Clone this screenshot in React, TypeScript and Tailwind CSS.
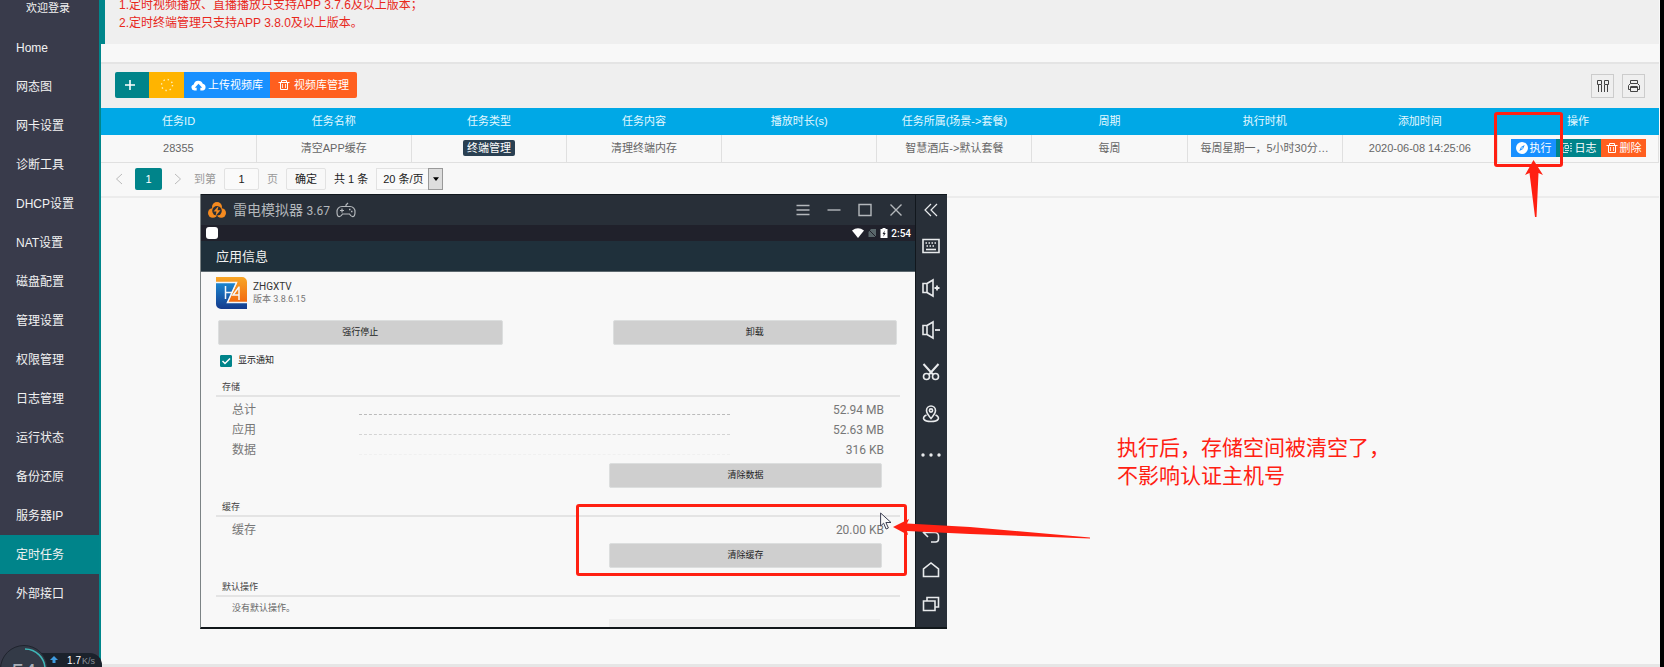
import type { ReactNode } from "react";
import { useState } from "react";

const FONT = "font-['Liberation_Sans','Noto_Sans_CJK_SC',sans-serif]";
const ANDROID_FONT = "font-['Roboto','Noto_Sans_CJK_SC',sans-serif]";

const MENU = [
  "Home",
  "网态图",
  "网卡设置",
  "诊断工具",
  "DHCP设置",
  "NAT设置",
  "磁盘配置",
  "管理设置",
  "权限管理",
  "日志管理",
  "运行状态",
  "备份还原",
  "服务器IP",
  "定时任务",
  "外部接口",
];

const COLUMNS = [
  "任务ID",
  "任务名称",
  "任务类型",
  "任务内容",
  "播放时长(s)",
  "任务所属(场景->套餐)",
  "周期",
  "执行时机",
  "添加时间",
  "操作",
];

function TrashIcon({ className }: { className?: string }) {
  return (
    <svg viewBox="0 0 12 12" className={className} fill="none" stroke="currentColor" strokeWidth="1">
      <path d="M.5 3.500h11M3.500 3.500v-2h5v2M2.500 3.500v7h7v-7" />
      <path d="M4.500 5v4M7.500 5v4" strokeWidth=".8" />
    </svg>
  );
}

function Sidebar() {
  const [active, setActive] = useState("定时任务");
  return (
    <aside className="w-[101px] shrink-0 border-r-2 border-[#00868b] bg-[#393b4b] text-[#f2f2f2]">
      <div className="h-7 pl-[26px] text-[11px] leading-4">欢迎登录</div>
      <nav>
        {MENU.map((item) => (
          <a
            key={item}
            href="#"
            onClick={() => setActive(item)}
            className={`flex h-[39px] items-center pl-4 text-xs ${item === active ? "bg-[#00848a]" : ""}`}
          >
            {item}
          </a>
        ))}
      </nav>
    </aside>
  );
}

function Toolbar() {
  return (
    <div className="flex h-[46px] items-start justify-between border-t-2 border-[#e4e4e4] bg-[#efefef] pt-2 pr-3.5 pl-[14px]">
      <div className="flex h-[26px] overflow-hidden rounded-xs text-[11px] text-white">
        <button aria-label="添加" className="flex w-[34px] items-center justify-center bg-[#00848a] pr-1">
          <svg viewBox="0 0 12 12" className="size-3" stroke="currentColor" strokeWidth="1.600">
            <path d="M6 1v10M1 6h10" />
          </svg>
        </button>
        <button aria-label="刷新" className="flex w-[35px] items-center justify-center bg-[#ffb400]">
          <svg viewBox="0 0 14 14" className="size-3.5" fill="none" stroke="#fff0b8" strokeWidth="1.400">
            <circle cx="7" cy="7" r="5.500" strokeDasharray="1.400 2.920" />
          </svg>
        </button>
        <button className="flex w-[86px] items-center justify-center gap-0.5 bg-[#1890ff]">
          <svg viewBox="0 0 16 12" className="h-[11px] w-[15px]" fill="currentColor">
            <path d="M4 11.500H3.500A3.300 3.300 0 0 1 2.800 5 5.200 5.200 0 0 1 12.700 4.200 3.700 3.700 0 0 1 12.500 11.500H10V8.500h2L8 4.200 4 8.500h2v3z" />
          </svg>
          上传视频库
        </button>
        <button className="flex w-[87px] items-center justify-center gap-1 bg-[#ff5f1f]">
          <TrashIcon className="size-3" />
          视频库管理
        </button>
      </div>
      <div className="mt-0.5 flex gap-2 text-[#444]">
        <button aria-label="筛选列" className="flex h-6 w-[23px] items-center justify-center border border-[#ccc]">
          <svg viewBox="0 0 14 14" className="size-3.5" fill="none" stroke="currentColor">
            <path d="M1.500 1.500h4v4h-4zM8.500 1.500h4v4h-4zM2.500 6v7M5.500 6v7M8.500 6v7M11.500 6v7" />
          </svg>
        </button>
        <button aria-label="打印" className="flex h-6 w-[23px] items-center justify-center border border-[#ccc]">
          <svg viewBox="0 0 14 14" className="size-3.5" fill="none" stroke="currentColor">
            <path d="M3.500 4.500v-3h7v3M3.500 10.500h-2v-4l2-2h7l2 2v4h-2M3.500 8h7v4.500h-7z" />
            <path d="M3.500 8h7" strokeWidth="2" />
          </svg>
        </button>
      </div>
    </div>
  );
}

function TaskTable() {
  return (
    <table className="w-full table-fixed border-collapse text-center text-[11px] whitespace-nowrap text-[#666]">
      <colgroup>
        {COLUMNS.map((c) => (
          <col key={c} className={c === "操作" ? "w-[161px]" : ""} />
        ))}
      </colgroup>
      <thead>
        <tr className="bg-[#00a8e6] text-[#e4f8ff]">
          {COLUMNS.map((c) => (
            <th key={c} className="h-[27px] p-0 font-normal">{c}</th>
          ))}
        </tr>
      </thead>
      <tbody>
        <tr className="border-b border-[#e0e0e0] [&>td]:h-[27px] [&>td]:border-r [&>td]:border-[#e0e0e0] [&>td]:p-0">
          <td>28355</td>
          <td>清空APP缓存</td>
          <td>
            <span className="inline-block rounded-xs bg-[#2a4052] px-1 leading-4 text-white">终端管理</span>
          </td>
          <td>清理终端内存</td>
          <td />
          <td>智慧酒店-&gt;默认套餐</td>
          <td>每周</td>
          <td>每周星期一，5小时30分…</td>
          <td>2020-06-08 14:25:06</td>
          <td>
            <div className="flex h-[18px] justify-end pr-3 text-white">
              <button className="flex w-[45px] items-center justify-center gap-0.5 bg-[#1890ff]">
                <svg viewBox="0 0 12 12" className="size-3">
                  <circle cx="6" cy="6" r="6" fill="#fff" />
                  <path d="M8.700 3 5 5 3.300 9 7 7z" fill="#1890ff" />
                  <circle cx="6" cy="6" r=".8" fill="#fff" />
                </svg>
                执行
              </button>
              <button className="flex w-[45px] items-center justify-center gap-0.5 bg-[#00848a]">
                <svg viewBox="0 0 12 12" className="size-3" fill="none" stroke="#c8e6e6">
                  <path d="M1 1.500h6M4 3.500h3.500v3H4zM2 5v5.500h5M4 8.500h4M9 1.500h2M9 4h2M9 6.500h2M9 9h2" />
                </svg>
                日志
              </button>
              <button className="flex w-[45px] items-center justify-center gap-0.5 bg-[#ff5f1f]">
                <TrashIcon className="size-3" />
                删除
              </button>
            </div>
          </td>
        </tr>
      </tbody>
    </table>
  );
}

function Pagination() {
  return (
    <div className="flex h-[35px] items-center border-b-2 border-[#ececec] pl-3.5 text-[11px] text-[#222]">
      <button aria-label="上一页" className="w-2">
        <svg viewBox="0 0 8 12" className="h-3 w-2" fill="none" stroke="#bbb"><path d="M7 1 1.500 6 7 11" /></svg>
      </button>
      <button className="ml-3 h-[22px] w-[27px] rounded-xs bg-[#00848a] text-white">1</button>
      <button aria-label="下一页" className="ml-3 w-2">
        <svg viewBox="0 0 8 12" className="h-3 w-2" fill="none" stroke="#bbb"><path d="M1 1l5.500 5L1 11" /></svg>
      </button>
      <label htmlFor="page" className="ml-3 text-[#999]">到第</label>
      <input id="page" defaultValue="1" className="ml-2 h-[22px] w-[35px] rounded-xs border border-[#e2e2e2] bg-[#fafafa] text-center" />
      <span className="ml-2 text-[#999]">页</span>
      <button className="ml-2 h-[22px] w-10 rounded-xs border border-[#e2e2e2]">确定</button>
      <span className="ml-2">共 1 条</span>
      <div className="relative ml-2 h-[22px] w-[67px]">
        <select aria-label="每页条数" className="h-full w-full appearance-none border border-[#e2e2e2] bg-[#fafafa] pl-1.5">
          <option>20 条/页</option>
        </select>
        <span className="pointer-events-none absolute inset-y-0 right-0 flex w-[15px] items-center justify-center border border-[#999] bg-[#ddd]">
          <svg viewBox="0 0 8 5" className="h-[4px] w-1.5"><path d="M0 0h8L4 5z" /></svg>
        </span>
      </div>
    </div>
  );
}

function SectionTitle({ children }: { children: ReactNode }) {
  return (
    <h3 className="mt-[11px] h-[18px] border-b-2 border-[#e4e4e4] pl-1.5 text-[9px] leading-4 text-[#444]">{children}</h3>
  );
}

function InfoRow({ label, value, dots }: { label: string; value: string; dots?: string }) {
  return (
    <div className="flex h-5 items-center pr-4 pl-4 text-xs text-[#777]">
      <span className="w-[127px]">{label}</span>
      {dots && <span className={`mb-[5px] w-[371px] self-end border-b border-dashed ${dots}`} />}
      <span className="ml-auto">{value}</span>
    </div>
  );
}

function GreyButton({ children, className = "" }: { children: ReactNode; className?: string }) {
  return (
    <button className={`h-[25px] rounded-xs border border-[#dcdede] bg-[#cfcfcf] text-[9px] text-[#222] ${className}`}>
      {children}
    </button>
  );
}

const SIDE_TOOLS: { name: string; art: ReactNode }[] = [
  {
    name: "键盘",
    art: (
      <>
        <path d="M1 2.500h16v13H1z" />
        <path d="M3.500 6h11M4.500 9h9" strokeDasharray="1.500 1.500" />
        <path d="M4 12.500h10" />
      </>
    ),
  },
  { name: "音量加", art: <><path d="M1 4.500h4v9H1zM5 4.500 11 1v16l-6-3.500" /><path d="M12.500 9h5M15 6.500v5" strokeWidth="1.800" /></> },
  { name: "音量减", art: <><path d="M1 4.500h4v9H1zM5 4.500 11 1v16l-6-3.500" /><path d="M13 9h5" strokeWidth="1.800" /></> },
  {
    name: "截图",
    art: (
      <>
        <path d="M1.500 1 11 11.500M16.500 1 7 11.500" strokeWidth="2" />
        <circle cx="4.500" cy="13.500" r="3" />
        <circle cx="13.500" cy="13.500" r="3" />
      </>
    ),
  },
  {
    name: "定位",
    art: (
      <>
        <path d="M9 13.500C6 10 4.500 8 4.500 5.500a4.500 4.500 0 0 1 9 0C13.500 8 12 10 9 13.500z" />
        <circle cx="9" cy="5.500" r="1.600" />
        <path d="M4.500 10C-1 12.500 1.500 16.500 9 16.500s10-4 4.500-6.500" />
      </>
    ),
  },
  {
    name: "更多",
    art: (
      <g fill="currentColor" stroke="none">
        <circle cx="1" cy="8" r="1.700" />
        <circle cx="9" cy="8" r="1.700" />
        <circle cx="17" cy="8" r="1.700" />
      </g>
    ),
  },
];

const NAV_TOOLS: { name: string; art: ReactNode }[] = [
  { name: "返回", art: <path d="M6 1 1.500 5.500 6 10M1.500 5.500H13a3.500 3.500 0 0 1 3.500 3.500v3a3 3 0 0 1-3 3H9" /> },
  { name: "主页", art: <path d="M1.500 15.500V8L9 2l7.500 6v7.500z" /> },
  { name: "最近", art: <path d="M1.500 6H13v9.500H1.500zM5 6V2.500h11.500v9.500H13" /> },
];

function SideTool({ name, art, className }: { name: string; art: ReactNode; className: string }) {
  return (
    <button aria-label={name} className={`flex w-full items-center justify-center pr-px ${className}`}>
      <svg viewBox="0 0 18 18" className="size-[18px] overflow-visible" fill="none" stroke="currentColor" strokeWidth="1.600">
        {art}
      </svg>
    </button>
  );
}

function EmulatorWindow() {
  const [notify, setNotify] = useState(true);
  return (
    <section className={`absolute top-[194px] left-[200px] flex w-[747px] border-b-2 border-l border-b-[#11171a] border-l-[#7c8385] bg-[#f8f8f8] ${ANDROID_FONT}`}>
      <div className="min-w-0 flex-1">
        <div className="flex h-[31px] items-center border-t border-[#11171d] bg-[#282f38] pl-[7px] text-[#b4b8bc]">
          <svg viewBox="0 0 18 16" className="h-4 w-[18px]">
            <circle cx="9" cy="5" r="5" fill="#f58a1f" />
            <circle cx="4.800" cy="11" r="4.800" fill="#f58a1f" />
            <circle cx="13.200" cy="11" r="4.800" fill="#f58a1f" />
            <circle cx="9" cy="8.800" r="4.800" fill="#282f38" />
            <path d="M10.500 4 5.500 9.500h3L7.500 14l5-5.800h-3z" fill="#f58a1f" />
          </svg>
          <h2 className="ml-[7px] text-sm">雷电模拟器 <span className="text-xs">3.67</span></h2>
          <svg viewBox="0 0 20 16" className="ml-1.5 h-4 w-5" fill="none" stroke="currentColor" strokeWidth="1.200">
            <path d="M6 4.500h8a5 5 0 0 1 5 5.500c0 6-3.500 5.500-5.500 2h-7C4.500 15.500 1 16 1 10a5 5 0 0 1 5-5.500zM10 4.500V3l2-2M4 8.500h4M6 6.500v4" />
            <path d="M13 7.500h1.500M15 9.500h1.500" strokeWidth="1.500" />
          </svg>
          <div className="ml-auto flex gap-[17px] pr-3">
            {[
              ["菜单", "M.5 2.500h13M.5 7h13M.5 11.500h13"],
              ["最小化", "M.5 7h13"],
              ["最大化", "M1 1.500h12v11H1z"],
              ["关闭", "M1.500 1.500l11 11M12.500 1.500l-11 11"],
            ].map(([name, d]) => (
              <button key={name} aria-label={name}>
                <svg viewBox="0 0 14 14" className="size-3.5" fill="none" stroke="currentColor" strokeWidth="1.400"><path d={d} /></svg>
              </button>
            ))}
          </div>
        </div>
        <div className="flex h-4 items-center gap-[3px] bg-[#20212b] pr-1 pl-[5px] text-[10px] font-medium text-white">
          <span className="mr-auto size-3 rounded-[3px] bg-white" />
          <svg viewBox="0 0 12 10" className="h-2.5 w-3" fill="currentColor"><path d="M0 2.500q6-4.500 12 0L6 10z" /></svg>
          <svg viewBox="0 0 10 10" className="size-2.5" fill="#59666a"><path d="M4 1h5v8H1.500V4zM1 1l8.500 8.500" /><path d="M1 1l8.500 8.500" stroke="#20212b" /></svg>
          <svg viewBox="0 0 8 10" className="h-2.5 w-2">
            <path d="M2.500 0h3v1H7.500v9H.5V1h2z" fill="#fff" />
            <path d="M4.800 2.500 2.500 6h1.300L3.300 8.800 5.700 5H4.300z" fill="#20212b" />
          </svg>
          <span>2:54</span>
        </div>
        <h1 className="h-[31px] border-b border-[#5c686e] bg-[#1f303b] pl-[15px] text-[13px] leading-[31px] text-[#f0f0f0]">应用信息</h1>

        <div className="px-[15px] pt-[5px]">
          <div className="flex h-8 gap-[5px]">
            <svg viewBox="0 0 32 32" className="size-8">
              <defs>
                <linearGradient id="logo-blue" x2="0" y2="1"><stop stopColor="#1c86cf" /><stop offset="1" stopColor="#143a8c" /></linearGradient>
                <linearGradient id="logo-orange" x2="0" y2="1"><stop stopColor="#f8a525" /><stop offset="1" stopColor="#f26a0f" /></linearGradient>
              </defs>
              <path d="M0 6h20L11 26h20v6H5a5 5 0 0 1-5-5z" fill="url(#logo-blue)" />
              <path d="M0 0h26a5 5 0 0 1 5 5v20H12L21 6H0z" fill="url(#logo-orange)" />
              <path d="M0 5.500h20.500L11.500 25.500H31M9.500 9v13M9.500 15.500h6M23 9.500V23M23 10l-6 8h6" fill="none" stroke="#f4f7fa" strokeWidth="1.500" />
            </svg>
            <div className="pt-[3px] text-[10px] leading-[13px] text-[#333]">
              <p>ZHGXTV</p>
              <p className="text-[9px] text-[#777]">版本 3.8.6.15</p>
            </div>
          </div>
          <div className="mt-[11px] grid grid-cols-2 gap-[110px] pr-[3px] pl-0.5">
            <GreyButton>强行停止</GreyButton>
            <GreyButton>卸载</GreyButton>
          </div>
          <label className="mt-[9px] flex h-[14px] items-center gap-1.5 pl-1 text-[9px] text-[#222]">
            <span className="relative flex">
              <input
                type="checkbox"
                checked={notify}
                onChange={(e) => setNotify(e.target.checked)}
                className="size-3 appearance-none rounded-[1px] border border-[#00848a] checked:bg-[#00848a]"
              />
              {notify && (
                <svg viewBox="0 0 12 12" className="pointer-events-none absolute inset-0 size-3" fill="none" stroke="#fff" strokeWidth="1.500">
                  <path d="M2.500 6 5 8.500 10 3.500" />
                </svg>
              )}
            </span>
            显示通知
          </label>

          <SectionTitle>存储</SectionTitle>
          <div className="mt-[3px]">
            <InfoRow label="总计" value="52.94 MB" dots="border-[#bbb]" />
            <InfoRow label="应用" value="52.63 MB" dots="border-[#d4d4d4]" />
            <InfoRow label="数据" value="316 KB" dots="border-[#f0f0f0]" />
          </div>
          <GreyButton className="mt-[3px] mr-[18px] ml-auto block w-[273px]">清除数据</GreyButton>

          <SectionTitle>缓存</SectionTitle>
          <div className="mt-[3px]">
            <InfoRow label="缓存" value="20.00 KB" />
          </div>
          <GreyButton className="mt-[3px] mr-[18px] ml-auto block w-[273px]">清除缓存</GreyButton>

          <SectionTitle>默认操作</SectionTitle>
          <p className="h-[22px] pl-4 text-[9px] leading-[22px] text-[#666]">没有默认操作。</p>
          <div className="mr-5 ml-auto h-2 w-[271px] bg-[#efefef]" />
        </div>
      </div>

      <div className="flex w-8 flex-col border-t border-l border-[#11171d] bg-[#282f38] text-[#e8eaec]">
        <SideTool name="收起" className="h-[30px]" art={<path d="M9 3 3 9l6 6M15 3 9 9l6 6" strokeWidth="1.200" />} />
        {SIDE_TOOLS.map((t) => (
          <SideTool key={t.name} {...t} className="h-[42px]" />
        ))}
        <div className="mt-auto pb-1.5">
          {NAV_TOOLS.map((t) => (
            <SideTool key={t.name} {...t} className="h-[34px]" />
          ))}
        </div>
      </div>
    </section>
  );
}

function Annotations() {
  return (
    <>
      <div className="pointer-events-none absolute top-[112px] left-[1494px] h-[55px] w-[69px] rounded-[3px] border-3 border-[#ff2012]" />
      <svg viewBox="0 0 18 58" className="pointer-events-none absolute top-[160px] left-[1525px] h-[58px] w-[18px]" fill="#ff2012">
        <path d="M8.500 0 18 15l-4.500-2-2 44H10L4.500 13 0 15z" />
      </svg>
      <div className="pointer-events-none absolute top-[504px] left-[576px] h-[72px] w-[331px] rounded-[3px] border-3 border-[#ff2012]" />
      <svg viewBox="0 0 12 19" className="pointer-events-none absolute top-[512px] left-[880px] h-[19px] w-3" fill="#f8f8f8" stroke="#3a3d50">
        <path d="M.6 1v13l3-2.800 2.500 5.800 2.300-1-2.500-5.500H11z" />
      </svg>
      <svg viewBox="0 0 198 22" className="pointer-events-none absolute top-[518px] left-[893px] h-[22px] w-[198px]" fill="#ff2012">
        <path d="M0 9 16 1l-2 4.500L77 9l120 10.500v1L77 16l-63-3 1 4z" />
      </svg>
      <p className="absolute top-[434px] left-[1117px] text-[21px] leading-7 whitespace-nowrap text-[#ff2012]">
        执行后，存储空间被清空了，
        <br />
        不影响认证主机号
      </p>
    </>
  );
}

function SpeedBall() {
  return (
    <div className="absolute bottom-0 left-0 flex h-[22px] w-[102px] items-end overflow-hidden">
      <div className="ml-6 flex h-3.5 flex-1 items-baseline justify-end gap-px rounded-tr-xl bg-[#1b222c] pr-[7px] text-[10px] leading-4 text-white">
        <svg viewBox="0 0 8 8" className="mr-2 size-2" fill="#3f9be0"><path d="M4 0 8 4H5.500v3h-3V4H0z" /></svg>
        1.7<span className="text-[9px] text-[#8a9098]">K/s</span>
      </div>
      <div className="absolute top-0 left-0 size-12 rounded-full border border-[#20242e] bg-[#333a47] pt-3.5 text-center text-[22px] leading-6 text-[#aab0b8]">
        54
        <svg viewBox="0 0 46 46" className="absolute inset-0 size-[46px]" fill="none" stroke="#3fb8b8" strokeWidth="1.500">
          <path d="M24 3a20 20 0 0 1 20 20" />
        </svg>
      </div>
    </div>
  );
}

export default function App() {
  return (
    <div className={`relative flex min-h-screen overflow-hidden bg-[#f8f8f8] ${FONT}`}>
      <Sidebar />
      <main className="flex min-w-0 flex-1 flex-col border-b-3 border-[#e6e6e6] pr-px">
        <div className="h-11 overflow-hidden border-l-4 border-[#00868b] bg-[#efefef] pl-3.5 text-xs leading-[18px] text-[#e8281c]">
          <p className="-mt-1">1.定时视频播放、直播播放只支持APP 3.7.6及以上版本；</p>
          <p>2.定时终端管理只支持APP 3.8.0及以上版本。</p>
        </div>
        <div className="mt-[18px]">
          <Toolbar />
          <TaskTable />
          <Pagination />
        </div>
      </main>
      <div className="w-1 shrink-0 bg-black" />
      <EmulatorWindow />
      <Annotations />
      <SpeedBall />
    </div>
  );
}
